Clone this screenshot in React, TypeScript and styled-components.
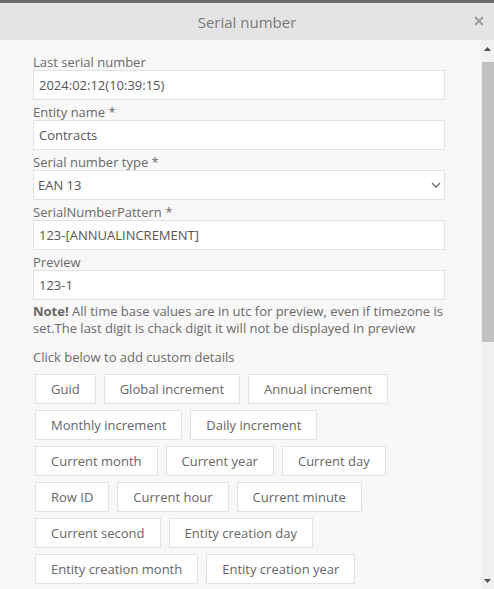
import styled, { createGlobalStyle } from 'styled-components';

const GlobalStyle = createGlobalStyle`
	html, body {
		margin: 0;
		padding: 0;
		height: 100%;
		overflow: hidden;
	}
	body {
		font-family: 'Open Sans', 'Noto Sans', sans-serif;
		font-size: 13px;
		color: #666;
	}
	#root {
		height: 100%;
	}
`;

const Modal = styled.div`
	display: flex;
	flex-direction: column;
	height: 100vh;
	border-top: 3px solid #6b6b6b;
	box-sizing: border-box;
	background: #f8f8f8;
`;

const Header = styled.div`
	flex: 0 0 37px;
	display: flex;
	align-items: center;
	justify-content: center;
	position: relative;
	background: #e4e4e4;
	color: #7a7a7a;
	font-size: 15px;
`;

const Close = styled.button`
	position: absolute;
	right: 9px;
	top: 12px;
	width: 12px;
	height: 12px;
	padding: 0;
	border: none;
	background: none;
	cursor: pointer;
`;

const Body = styled.div`
	flex: 1;
	min-height: 0;
	display: flex;
`;

const Content = styled.div`
	flex: 1;
	min-width: 0;
	overflow: hidden;
	padding: 10px 36px 0 33px;
`;

/* scroll rail drawn beside the content */
const Rail = styled.div`
	flex: 0 0 13px;
	display: flex;
	flex-direction: column;
	background: #f0f0f0;
`;

const RailArrow = styled.div`
	flex: 0 0 17px;
	display: flex;
	align-items: center;
	justify-content: center;
`;

const RailTrack = styled.div`
	flex: 1;
	padding-top: 5px;
`;

const Thumb = styled.div`
	height: 280px;
	margin-left: 1px;
	background: #c1c1c1;
`;

const Field = styled.div`
	display: flex;
	flex-direction: column;
`;

const Label = styled.label`
	padding-top: 4px;
	line-height: 16px;
	color: #6a6a6a;
`;

const Input = styled.input`
	box-sizing: border-box;
	height: 30px;
	width: 100%;
	padding: 0 5px;
	border: 1px solid #e2e2e2;
	background: #fff;
	font: inherit;
	color: #555;
	outline: none;
`;

const SelectWrap = styled.div`
	position: relative;
	display: flex;
`;

const Select = styled.select`
	box-sizing: border-box;
	height: 30px;
	width: 100%;
	padding: 0 4px;
	border: 1px solid #e2e2e2;
	background: #fff;
	font: inherit;
	color: #555;
	appearance: none;
	outline: none;
`;

const Chevron = styled.svg`
	position: absolute;
	right: 4px;
	top: 12px;
	pointer-events: none;
`;

const Note = styled.p`
	margin: 3px 0 0;
	line-height: 17px;
	color: #6a6a6a;
	b {
		font-weight: 700;
		color: #666;
	}
`;

const Hint = styled.p`
	margin: 10px 0 7px;
	line-height: 20px;
	color: #6a6a6a;
`;

const Chips = styled.div`
	display: flex;
	flex-direction: column;
	gap: 6px;
	padding-left: 2px;
`;

const ChipRow = styled.div`
	display: flex;
	gap: 8px;
`;

const Chip = styled.button`
	box-sizing: border-box;
	height: 30px;
	padding: 0 15px;
	border: 1px solid #e2e2e2;
	background: #fff;
	font: inherit;
	color: #666;
	cursor: pointer;
`;

const chipRows: string[][] = [
	['Guid', 'Global increment', 'Annual increment'],
	['Monthly increment', 'Daily increment'],
	['Current month', 'Current year', 'Current day'],
	['Row ID', 'Current hour', 'Current minute'],
	['Current second', 'Entity creation day'],
	['Entity creation month', 'Entity creation year'],
];

const App = () => {
	return (
		<>
			<GlobalStyle />
			<Modal>
				<Header>
					Serial number
					<Close aria-label='Close'>
						<svg width='12' height='12' viewBox='0 0 12 12'>
							<path d='M2 2 L10 10 M10 2 L2 10' stroke='#9a9a9a' strokeWidth='1.8' />
						</svg>
					</Close>
				</Header>
				<Body>
					<Content>
						<Field>
							<Label>Last serial number</Label>
							<Input defaultValue='2024:02:12(10:39:15)' readOnly />
						</Field>
						<Field>
							<Label>Entity name *</Label>
							<Input defaultValue='Contracts' />
						</Field>
						<Field>
							<Label>Serial number type *</Label>
							<SelectWrap>
								<Select defaultValue='ean13'>
									<option value='ean13'>EAN 13</option>
									<option value='ean8'>EAN 8</option>
									<option value='text'>Text</option>
								</Select>
								<Chevron width='10' height='6' viewBox='0 0 10 6'>
									<path d='M1 1 L5 5 L9 1' fill='none' stroke='#666' strokeWidth='1.3' />
								</Chevron>
							</SelectWrap>
						</Field>
						<Field>
							<Label>SerialNumberPattern *</Label>
							<Input defaultValue='123-[ANNUALINCREMENT]' />
						</Field>
						<Field>
							<Label>Preview</Label>
							<Input defaultValue='123-1' readOnly />
						</Field>
						<Note>
							<b>Note!</b> All time base values are in utc for preview, even if timezone is set.The last
							digit is chack digit it will not be displayed in preview
						</Note>
						<Hint>Click below to add custom details</Hint>
						<Chips>
							{chipRows.map((row, i) => (
								<ChipRow key={i}>
									{row.map((name) => (
										<Chip key={name}>{name}</Chip>
									))}
								</ChipRow>
							))}
						</Chips>
					</Content>
					<Rail>
						<RailArrow>
							<svg width='7' height='4' viewBox='0 0 7 4'>
								<path d='M0 4 L3.5 0 L7 4 Z' fill='#505050' />
							</svg>
						</RailArrow>
						<RailTrack>
							<Thumb />
						</RailTrack>
						<RailArrow>
							<svg width='7' height='4' viewBox='0 0 7 4'>
								<path d='M0 0 L3.5 4 L7 0 Z' fill='#505050' />
							</svg>
						</RailArrow>
					</Rail>
				</Body>
			</Modal>
		</>
	);
};

export default App;
